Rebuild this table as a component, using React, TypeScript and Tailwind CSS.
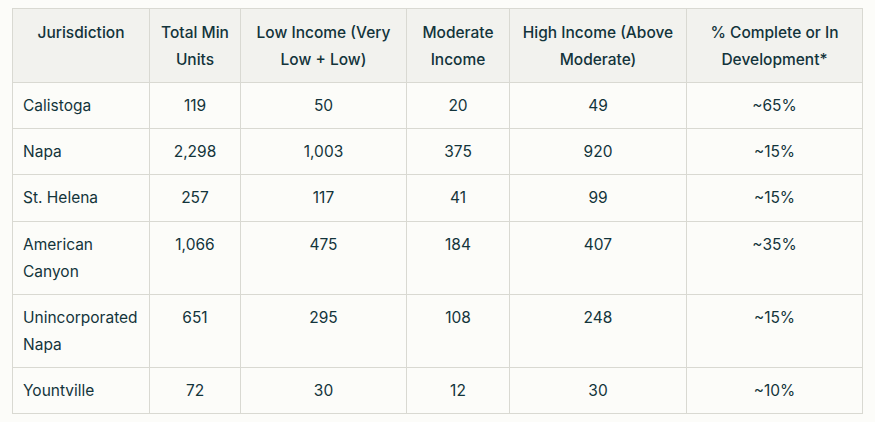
import React from "react";

const headers = [
  "Jurisdiction",
  "Total Min Units",
  "Low Income (Very Low + Low)",
  "Moderate Income",
  "High Income (Above Moderate)",
  "% Complete or In Development*",
];

const rows = [
  ["Calistoga", "119", "50", "20", "49", "~65%"],
  ["Napa", "2,298", "1,003", "375", "920", "~15%"],
  ["St. Helena", "257", "117", "41", "99", "~15%"],
  ["American Canyon", "1,066", "475", "184", "407", "~35%"],
  ["Unincorporated Napa", "651", "295", "108", "248", "~15%"],
  ["Yountville", "72", "30", "12", "30", "~10%"],
];

export default function App() {
  return (
    <div
      className="min-h-[422px] w-[875px] bg-[#fcfcf9] pt-[8px] pl-[12px] text-[#13343b]"
      style={{ fontFamily: "Inter, 'Liberation Sans', sans-serif" }}
    >
      <table className="w-[850px] table-fixed border-collapse text-[15.5px] leading-[27px]">
        <colgroup>
          <col className="w-[137px]" />
          <col className="w-[91px]" />
          <col className="w-[166px]" />
          <col className="w-[103px]" />
          <col className="w-[177px]" />
          <col className="w-[176px]" />
        </colgroup>
        <thead>
          <tr className="bg-[#f2f2ee]">
            {headers.map((h) => (
              <th
                key={h}
                className="border border-[#d9d9d2] px-[10px] py-[9.5px] text-center align-top font-medium"
              >
                {h}
              </th>
            ))}
          </tr>
        </thead>
        <tbody>
          {rows.map((r) => (
            <tr key={r[0]}>
              {r.map((c, i) => (
                <td
                  key={i}
                  className={
                    "border border-[#d9d9d2] px-[10px] py-[9.1px] align-top font-normal " +
                    (i === 0 ? "text-left" : "text-center")
                  }
                >
                  {c}
                </td>
              ))}
            </tr>
          ))}
        </tbody>
      </table>
    </div>
  );
}
